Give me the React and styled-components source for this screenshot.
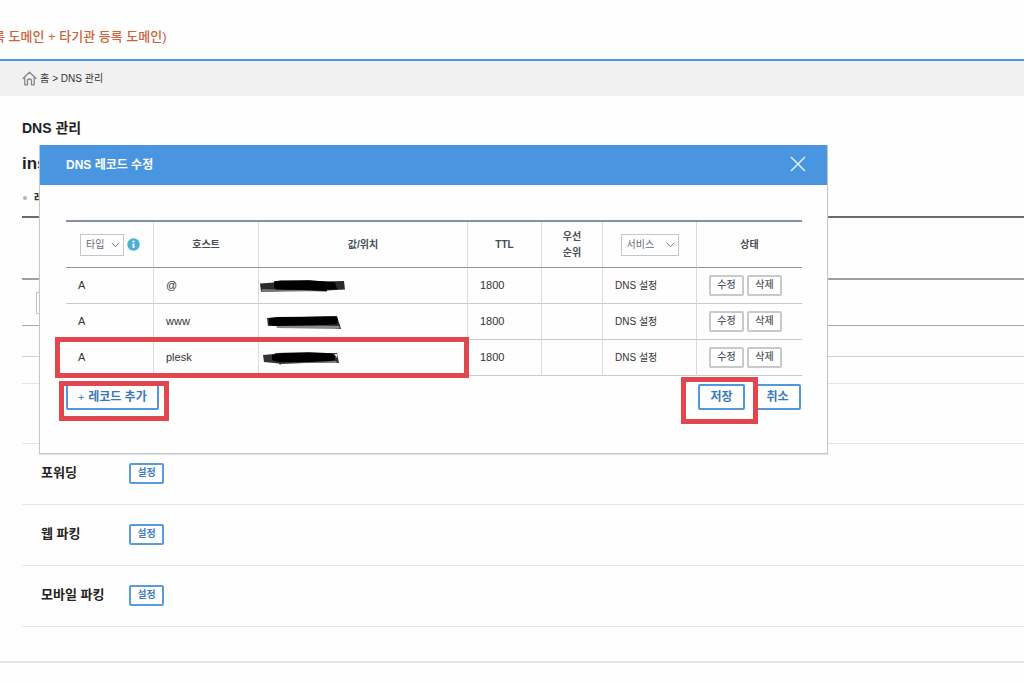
import React from "react";
import styled, { createGlobalStyle } from "styled-components";

const Global = createGlobalStyle`
  * { box-sizing: border-box; }
  body {
    margin: 0;
    background: #fefefe;
    color: #333;
    font-family: "Liberation Sans", "Noto Sans CJK KR", sans-serif;
    font-size: 10px;
    overflow-x: hidden;
  }
  button, select, input { font-family: inherit; margin: 0; }
`;

const Page = styled.div`
  position: relative;
  min-height: 100vh;
  overflow: hidden;
`;

const TopBar = styled.header`
  padding: 27px 0 12px;
  border-bottom: 2px solid #4e96de;
`;

const TopText = styled.p`
  margin: 0 0 0 -7px;
  font-size: 13px;
  font-weight: 500;
  line-height: 20px;
  color: #cd6439;
  white-space: nowrap;
`;

const Crumbs = styled.nav`
  display: flex;
  align-items: center;
  gap: 3px;
  height: 35px;
  padding-left: 22px;
  background: #f1f1f2;
  line-height: 16px;

  a {
    display: flex;
    align-items: center;
    gap: 3px;
    color: inherit;
    text-decoration: none;
  }
`;

const Main = styled.main`
  padding: 22px 0 34px 22px;
  border-bottom: 2px solid #e6e6e6;
`;

const PageTitle = styled.h1`
  margin: 0;
  font-size: 14px;
  line-height: 20px;
  color: #222;
`;

const DomainName = styled.h2`
  margin: 14px 0 0;
  font-size: 17px;
  line-height: 24px;
  color: #222;
`;

const Note = styled.p`
  display: flex;
  align-items: center;
  gap: 7px;
  margin: 14px 0 10px;
  font-size: 11px;
  font-weight: 700;
  line-height: 16px;

  &::before {
    content: "";
    width: 4px;
    height: 4px;
    margin-left: 1px;
    border-radius: 50%;
    background: #b5b5b5;
  }
`;

const Band = styled.div`
  height: ${(p) => p.$h}px;
  padding: 12px 14px;
  border-top: ${(p) => p.$line}px solid ${(p) => p.$color};
`;

const Filter = styled.input`
  display: block;
  width: 120px;
  height: 22px;
  border: 1px solid #c4c4c4;
  background: #fff;
`;

const Setting = styled.div`
  display: flex;
  align-items: center;
  height: 61px;
  padding: 0 0 2px 19px;
  border-top: 1px solid #e6e6e6;
`;

const SettingList = styled.section`
  border-bottom: 1px solid #e6e6e6;
`;

const SettingName = styled.h3`
  width: 88px;
  margin: 0;
  font-size: 13px;
  line-height: 20px;
  color: #222;
`;

const SetButton = styled.button`
  width: 35px;
  height: 21px;
  padding: 0 0 2px;
  border: 2px solid #5c9bd9;
  border-radius: 2px;
  background: #fff;
  color: #3f7cc0;
  font-size: 10px;
  font-weight: 700;
  line-height: 16px;
`;

const Dialog = styled.section`
  position: absolute;
  top: 145px;
  left: 39px;
  width: calc(100% - 78px);
  max-width: 789px;
  border: 1px solid #c6c6c9;
  border-top: 0;
  background: #fefefe;
  box-shadow: 0 1px 1px #e4e4e4;
`;

const DialogHead = styled.header`
  display: flex;
  align-items: center;
  justify-content: space-between;
  height: 40px;
  padding: 0 21px 0 26px;
  background: #4a95e0;
`;

const DialogTitle = styled.h2`
  margin: 0;
  font-size: 12px;
  line-height: 18px;
  color: #fff;
`;

const CloseButton = styled.button`
  display: flex;
  padding: 0 0 2px;
  border: 0;
  background: none;
`;

const DialogBody = styled.div`
  padding: 35px 26px 43px;
`;

const Records = styled.table`
  width: 100%;
  table-layout: fixed;
  border-collapse: separate;
  border-spacing: 0;
  border-top: 2px solid #86919b;
  color: #333;

  th, td { border-right: 1px solid #d9dbde; }
  th:last-child, td:last-child { border-right: 0; }
`;

const Th = styled.th`
  height: 46px;
  padding: 0;
  border-bottom: 1px solid #8b959e;
  font-size: 10px;
  line-height: 16px;
  color: #484d55;
`;

const Td = styled.td`
  height: 36px;
  padding: ${(p) => (p.$flush ? "2px 0 0" : p.$latin ? "0 12px 2px" : "0 12px")};
  border-bottom: 1px solid #c8cacd;
  font-size: ${(p) => (p.$latin ? 11 : 10)}px;
  line-height: 16px;
`;

const HeadTools = styled.div`
  display: flex;
  align-items: center;
  justify-content: ${(p) => (p.$center ? "center" : "flex-start")};
  gap: 3px;
  padding-left: ${(p) => (p.$center ? 0 : 14)}px;
`;

const SelectBox = styled.span`
  display: grid;
  align-items: center;
  width: ${(p) => p.$w}px;
  height: 22px;
  border: 1px solid #c4c6c9;
  background: #fff;

  select, svg { grid-area: 1 / 1; }
  svg { justify-self: end; margin-right: 3px; pointer-events: none; }
  select {
    width: 100%;
    height: 20px;
    padding: 0 0 0 5px;
    border: 0;
    appearance: none;
    background: none;
    color: #666b73;
    font-size: 10px;
  }
`;

const Actions = styled.div`
  display: flex;
  gap: 3px;
`;

const RowButton = styled.button`
  width: 35px;
  height: 21px;
  padding: 0 0 2px;
  border: 2px solid #c9c9cc;
  border-radius: 2px;
  background: #fff;
  color: #50555d;
  font-size: 10px;
  font-weight: 500;
  line-height: 16px;
`;

const DialogFoot = styled.footer`
  display: flex;
  gap: 9px;
  margin-top: 8px;
`;

const FootButton = styled.button`
  width: ${(p) => p.$w}px;
  height: 26px;
  margin-right: ${(p) => (p.$first ? "auto" : 0)};
  padding: 0;
  border: 2px solid #5296de;
  border-radius: 2px;
  background: #fff;
  color: #3a78bd;
  font-size: 12px;
  font-weight: 700;
  line-height: 20px;

  small {
    margin-right: 4px;
    font-size: 10px;
    font-weight: 400;
  }
`;

const Redaction = styled.svg`
  display: block;
`;

const Mark = styled.div`
  position: absolute;
  top: ${(p) => p.$top}px;
  left: ${(p) => p.$left}px;
  width: ${(p) => p.$w}px;
  height: ${(p) => p.$h}px;
  border: 5px solid #e0474f;
  pointer-events: none;
`;

const scribbles = [
  <Redaction key="a" width="100" height="16" viewBox="0 0 100 16" aria-hidden="true">
    <path d="M1 4.5 15 3.5 16 2 50 1 64 2.5 85 2 86 10.5 68 11.5 68 12.5 35 11.5 2 13Z" fill="#2b2b2b" />
    <path d="M3 10 36 11 66 11.5 66 12 2 13Z" fill="#777" />
    <path d="M15 2.5 22 1.5 62 2 76 3.5 78 10 68 10.5 67 12 45 11 17 10.5 15 8Z" fill="#000" />
  </Redaction>,
  <Redaction key="b" width="100" height="16" viewBox="0 0 100 16" aria-hidden="true">
    <path d="M17 10 75 8 80 7 82 14 18 13Z" fill="#858585" />
    <path d="M8 3 78 1 80 8 82 14 60 11 9 11Z" fill="#2b2b2b" />
    <path d="M10 3 18 2 76 1.5 79 4 78 9 55 11 15 11 10 9Z" fill="#000" />
    <path d="M18 11 60 10.5 80 11 81 13.5 18 12.5Z" fill="#888" />
  </Redaction>,
  <Redaction key="c" width="100" height="16" viewBox="0 0 100 16" aria-hidden="true">
    <path d="M4 4 15 3 17 2 50 1 68 2 78 2 80 12 45 12 22 13 21 14 20 12.5 5 11Z" fill="#333" />
    <path d="M13 4 24 2 70 2 76 4 76 9 68 11 20 11 13 9Z" fill="#000" />
    <path d="M75 3 78 3 78 7Z" fill="#ddd" />
    <path d="M40 11.5 76 10 79 12Z" fill="#888" />
  </Redaction>,
];

const records = ["@", "www", "plesk"];
const widths = [88, 105, 209, 74, 61, 94, 105];
const settings = ["포워딩", "웹 파킹", "모바일 파킹"];

const Chevron = () => (
  <svg width="9" height="6" viewBox="0 0 9 6" fill="none" stroke="#777c84" aria-hidden="true">
    <path d="M.8.8 4.5 4.7 8.2.8" />
  </svg>
);

function Select({ label, width }) {
  return (
    <SelectBox $w={width}>
      <select aria-label={label}>
        <option>{label}</option>
      </select>
      <Chevron />
    </SelectBox>
  );
}

function RecordDialog() {
  return (
    <Dialog role="dialog" aria-labelledby="dialog-title">
      <DialogHead>
        <DialogTitle id="dialog-title">DNS 레코드 수정</DialogTitle>
        <CloseButton type="button" aria-label="닫기">
          <svg width="16" height="16" viewBox="0 0 16 16" stroke="#e2effb" strokeWidth="1.5">
            <path d="M1 1 15 15M15 1 1 15" />
          </svg>
        </CloseButton>
      </DialogHead>
      <DialogBody>
        <Records>
          <colgroup>
            {widths.map((w, i) => (
              <col key={i} width={w} />
            ))}
          </colgroup>
          <thead>
            <tr>
              <Th>
                <HeadTools>
                  <Select label="타입" width={44} />
                  <svg width="13" height="13" viewBox="0 0 13 13" aria-hidden="true">
                    <circle cx="6.5" cy="6.5" r="6.2" fill="#4eaed9" />
                    <path d="M6.5 5.5V10" stroke="#fff" strokeWidth="2" />
                    <circle cx="6.5" cy="3.5" r="1.1" fill="#fff" />
                  </svg>
                </HeadTools>
              </Th>
              <Th>호스트</Th>
              <Th>값/위치</Th>
              <Th>TTL</Th>
              <Th>우선<br />순위</Th>
              <Th>
                <HeadTools $center>
                  <Select label="서비스" width={58} />
                </HeadTools>
              </Th>
              <Th>상태</Th>
            </tr>
          </thead>
          <tbody>
            {records.map((host, i) => (
              <tr key={host}>
                <Td $latin>A</Td>
                <Td $latin>{host}</Td>
                <Td $flush>{scribbles[i]}</Td>
                <Td $latin>1800</Td>
                <Td />
                <Td>DNS 설정</Td>
                <Td>
                  <Actions>
                    <RowButton type="button">수정</RowButton>
                    <RowButton type="button">삭제</RowButton>
                  </Actions>
                </Td>
              </tr>
            ))}
          </tbody>
        </Records>
        <DialogFoot>
          <FootButton type="button" $w={93} $first>
            <small>+</small>레코드 추가
          </FootButton>
          <FootButton type="button" $w={47}>저장</FootButton>
          <FootButton type="button" $w={47}>취소</FootButton>
        </DialogFoot>
      </DialogBody>
      <Mark $top={192} $left={15} $w={414} $h={41} />
      <Mark $top={236} $left={19} $w={110} $h={40} />
      <Mark $top={232} $left={641} $w={77} $h={47} />
    </Dialog>
  );
}

export default function App() {
  return (
    <Page>
      <Global />
      <TopBar>
        <TopText>록 도메인 + 타기관 등록 도메인)</TopText>
      </TopBar>
      <Crumbs>
        <a href="#home">
          <svg width="15" height="15" viewBox="0 0 15 15" fill="none" stroke="#85878d" strokeWidth="1.3" strokeLinejoin="round" strokeLinecap="round" aria-hidden="true">
            <path d="M1 7.5 7.5 1.2 14 7.5M2.8 7V13.8H5.5V9.8Q5.5 8 7.5 8T9.5 9.8V13.8H12.2V7" />
          </svg>
          홈
        </a>
        <span>&gt; DNS 관리</span>
      </Crumbs>
      <Main>
        <PageTitle>DNS 관리</PageTitle>
        <DomainName>ins</DomainName>
        <Note>레</Note>
        <Band $h={62} $line={2} $color="#67696d" />
        <Band $h={47} $line={2} $color="#9a9fa5">
          <Filter aria-label="검색" />
        </Band>
        <Band $h={31} $line={1} $color="#a5a9ad" />
        <Band $h={27} $line={1} $color="#cfcfcf" />
        <Band $h={60} $line={1} $color="#e4e4e4" />
        <SettingList>
          {settings.map((name) => (
            <Setting key={name}>
              <SettingName>{name}</SettingName>
              <SetButton type="button" aria-label={name + " 설정"}>설정</SetButton>
            </Setting>
          ))}
        </SettingList>
      </Main>
      <RecordDialog />
    </Page>
  );
}
